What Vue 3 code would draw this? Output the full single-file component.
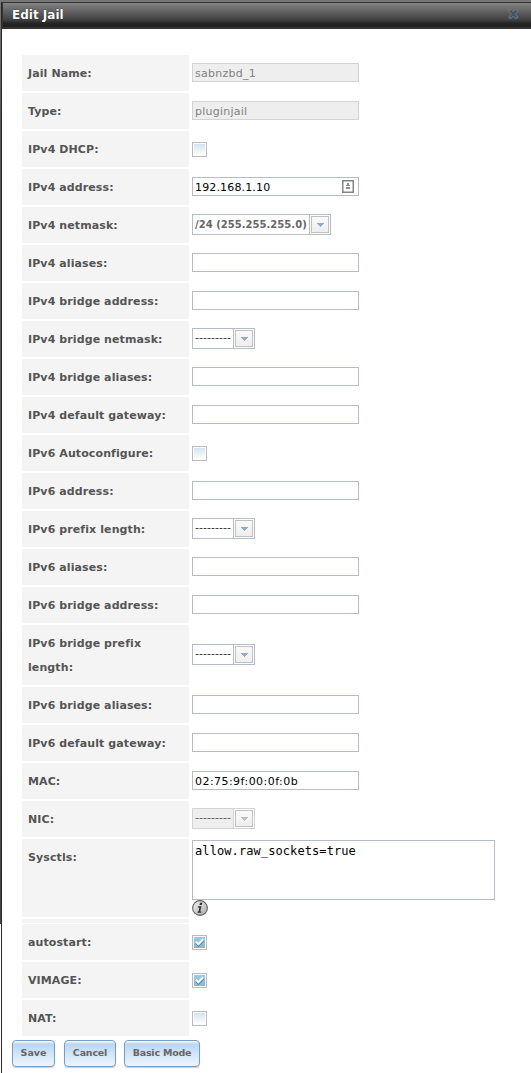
<template>
    <div class="page">
        <div class="dialog">
            <div class="title_bar">
                <span class="title">Edit Jail</span>
                <svg class="close" width="11" height="10" viewBox="0 0 11 10">
                    <path d="M2.6 2 L8 8 M8 2 L2.6 8" stroke="#74787b" stroke-width="3.6" stroke-linecap="square" />
                    <path d="M2.2 1.6 L8.4 8.4 M8.4 1.6 L2.2 8.4" stroke="#40576b" stroke-width="2.2" />
                </svg>
            </div>

            <form class="jail_form" @submit.prevent>
                <div v-for="row in rows" :key="row.label" class="row" :class="row.size">
                    <label class="label">{{ row.label }}</label>
                    <div class="field">
                        <div v-if="row.type == 'text'" class="text_box" :class="[row.kind, { disabled: row.disabled }]">
                            <span>{{ row.value }}</span>
                            <svg v-if="row.icon" width="12" height="13" viewBox="0 0 12 13">
                                <rect x="0.75" y="0.75" width="10.5" height="11.5" fill="#fff" stroke="#858585" stroke-width="1.5" />
                                <path d="M5 3h2v2h1v1H4V5h1zM4 7h4v2H4z" fill="#8f8f8f" />
                            </svg>
                        </div>
                        <div v-if="row.type == 'select'" class="select" :class="{ disabled: row.disabled, wide: row.value }">
                            <span class="choice">{{ row.value || '---------' }}</span>
                            <span class="arrow">
                                <i><svg width="7" height="4" viewBox="0 0 7 4"><path d="M0 0h7v1H6v1H5v1H4v1H3V3H2V2H1V1H0z" /></svg></i>
                            </span>
                        </div>
                        <div v-if="row.type == 'check'" class="check" :class="{ checked: row.value }">
                            <svg v-if="row.value" width="11" height="11" viewBox="0 0 11 11">
                                <path d="M2.3 5.9 L4.5 8.2 L9.4 3.2" fill="none" stroke="#3b7fab" stroke-width="2.6" />
                                <path d="M2 4.8 L4.4 7.3 L9.2 2.3" fill="none" stroke="#fff" stroke-width="2.1" />
                            </svg>
                        </div>
                        <template v-if="row.type == 'area'">
                            <div class="area">{{ row.value }}</div>
                            <svg class="info" width="16" height="16" viewBox="0 0 16 16">
                                <defs>
                                    <linearGradient id="ball" x1="0" y1="0" x2="1" y2="1">
                                        <stop offset="0" stop-color="#f4f4f4" />
                                        <stop offset="1" stop-color="#a9a9a9" />
                                    </linearGradient>
                                </defs>
                                <circle cx="8" cy="8" r="7.4" fill="url(#ball)" stroke="#626262" stroke-width="1.1" />
                                <path d="M8 2.8h2.3l-.5 2.1H7.5zM6.1 6.2h3.3L8.2 11.5h1.2l-.3 1.2H5.5l.3-1.2h.8l.8-4.1H5.8z" fill="#2d2d2d" />
                            </svg>
                        </template>
                    </div>
                </div>

                <div class="buttons">
                    <button class="save">Save</button>
                    <button class="cancel">Cancel</button>
                    <button class="mode">Basic Mode</button>
                </div>
            </form>
        </div>
    </div>
</template>

<script setup>
    import { ref } from "vue";

    let rows = ref([
        { label: "Jail Name:", type: "text", value: "sabnzbd_1", disabled: true },
        { label: "Type:", type: "text", value: "pluginjail", disabled: true },
        { label: "IPv4 DHCP:", type: "check" },
        { label: "IPv4 address:", type: "text", value: "192.168.1.10", icon: true, kind: "ip" },
        { label: "IPv4 netmask:", type: "select", value: "/24 (255.255.255.0)" },
        { label: "IPv4 aliases:", type: "text" },
        { label: "IPv4 bridge address:", type: "text" },
        { label: "IPv4 bridge netmask:", type: "select" },
        { label: "IPv4 bridge aliases:", type: "text" },
        { label: "IPv4 default gateway:", type: "text" },
        { label: "IPv6 Autoconfigure:", type: "check" },
        { label: "IPv6 address:", type: "text" },
        { label: "IPv6 prefix length:", type: "select" },
        { label: "IPv6 aliases:", type: "text" },
        { label: "IPv6 bridge address:", type: "text" },
        { label: "IPv6 bridge prefix length:", type: "select", size: "double" },
        { label: "IPv6 bridge aliases:", type: "text" },
        { label: "IPv6 default gateway:", type: "text" },
        { label: "MAC:", type: "text", value: "02:75:9f:00:0f:0b", kind: "mac" },
        { label: "NIC:", type: "select", disabled: true },
        { label: "Sysctls:", type: "area", value: "allow.raw_sockets=true", size: "tall" },
        { label: "autostart:", type: "check", value: true },
        { label: "VIMAGE:", type: "check", value: true },
        { label: "NAT:", type: "check" },
    ]);
</script>

<style>
    body{
        margin: 0;
        background: #fff;
    }
</style>

<style scoped>
    .page{
        box-sizing: border-box;
        height: 1073px;
        padding: 2px 0 0 1px;
        overflow: hidden;
        font-family: "DejaVu Sans", Verdana, sans-serif;
        font-size: 11px;
        background: linear-gradient(#777, #777) 0 0 / 100% 2px no-repeat,
            linear-gradient(#777, #54565a 120px, #555 600px, #444) 0 0 / 1px 924px no-repeat;
    }
    .dialog{
        box-sizing: border-box;
        height: 1071px;
        border-left: 1px solid #292929;
        background: #fff;
    }
    .title_bar{
        box-sizing: border-box;
        display: flex;
        justify-content: space-between;
        height: 27px;
        padding: 5px 12px 0 9px;
        border: solid #333;
        border-width: 1px 0 2px 1px;
        background: linear-gradient(#858585, #6b6b6b 25%, #3f3f3f 72%, #252525 84%, #202020);
    }
    .title{
        font-size: 12px;
        font-weight: bold;
        line-height: 15px;
        color: #fff;
        text-shadow: 0 0 1px #000;
    }
    .close{
        margin-top: 1px;
    }
    .jail_form{
        padding-top: 26px;
    }
    .row{
        display: flex;
        gap: 3px;
        height: 36px;
        margin: 0 0 2px 20px;
    }
    .label{
        box-sizing: border-box;
        width: 167px;
        padding: 7px 20px 0 6px;
        background: #f4f4f4;
        color: #555;
        font-weight: bold;
        line-height: 24px;
        letter-spacing: 0.1px;
    }
    .field{
        display: flex;
        flex-direction: column;
        justify-content: center;
        align-items: flex-start;
    }
    .double{
        height: 60px;
    }
    .tall{
        height: 78px;
        margin-bottom: 7px;
        /* thin empty strip between the two groups of rows */
        position: relative;
    }
    .tall::after{
        content: "";
        position: absolute;
        left: 0;
        top: 80px;
        width: 167px;
        height: 4px;
        background: #f4f4f4;
    }
    .tall .field{
        justify-content: flex-start;
        padding-top: 1px;
    }
    .text_box{
        box-sizing: border-box;
        display: flex;
        justify-content: space-between;
        align-items: center;
        width: 167px;
        height: 19px;
        margin-bottom: 1px;
        padding: 0 4px 0 2px;
        border: 1px solid #b5bcc7;
        line-height: 17px;
        letter-spacing: 0.25px;
        color: #000;
    }
    .text_box span{
        padding-top: 1px;
    }
    .text_box.ip{
        letter-spacing: 0.15px;
    }
    .text_box.mac{
        letter-spacing: 0.45px;
    }
    .text_box.disabled{
        border-color: #d3d3d3;
        background: #eee;
        color: #818181;
    }
    .select{
        box-sizing: border-box;
        display: flex;
        width: 63px;
        height: 21px;
        margin-bottom: 1px;
        border: 1px solid #b5bcc7;
    }
    .choice{
        flex: 1;
        padding-left: 2px;
        line-height: 18px;
        letter-spacing: 0.03px;
        color: #333;
        white-space: nowrap;
    }
    .wide{
        width: 139px;
    }
    .wide .choice{
        font-size: 10px;
        font-weight: bold;
        line-height: 19px;
        color: #666;
    }
    .arrow{
        box-sizing: border-box;
        width: 21px;
        padding: 1px;
        border-left: 1px solid #b5bcc7;
        background: #fff;
    }
    .arrow i{
        box-sizing: border-box;
        display: flex;
        align-items: center;
        justify-content: center;
        width: 18px;
        height: 17px;
        border: 1px solid #c0c0c0;
        background: linear-gradient(#fafafa, #eee);
        fill: #94a9d0;
    }
    .disabled .arrow i{
        fill: #bdbdbd;
    }
    .select.disabled, .disabled .arrow{
        border-color: #d3d3d3;
    }
    .disabled .choice{
        background: #eee;
        color: #555;
    }
    .check{
        box-sizing: border-box;
        width: 15px;
        height: 15px;
        margin-top: 1px;
        padding: 1px;
        border: 1px solid #b5bcc7;
        background: linear-gradient(#d2e3ee, #fff) content-box;
    }
    .check.checked{
        background: linear-gradient(#9ccbe6, #84b8da) content-box;
    }
    .check svg{
        display: block;
    }
    .area{
        box-sizing: border-box;
        width: 303px;
        height: 60px;
        padding: 2px;
        border: 1px solid #b5bcc7;
        font-family: "DejaVu Sans Mono", monospace;
        font-size: 12px;
        line-height: 16px;
        letter-spacing: 0.09px;
        color: #000;
    }
    .info{
        display: block;
    }
    .buttons{
        display: flex;
        padding: 2px 0 0 10px;
    }
    button{
        height: 27px;
        margin: 0;
        padding: 0 0 2px;
        border: 1px solid #769dc0;
        border-radius: 4px;
        box-shadow: 0 1px 1px rgba(0, 0, 0, 0.2);
        background: linear-gradient(#fff, #b9d6f2 3px, #cfe2f6 45%, #eef5fd);
        font-family: "DejaVu Sans", Verdana, sans-serif;
        font-size: 9.5px;
        font-weight: bold;
        letter-spacing: -0.2px;
        color: #666;
    }
    .save{
        width: 43px;
        letter-spacing: 0;
    }
    .cancel{
        width: 52px;
        margin: 0 8px 0 9px;
    }
    .mode{
        width: 76px;
    }
</style>
